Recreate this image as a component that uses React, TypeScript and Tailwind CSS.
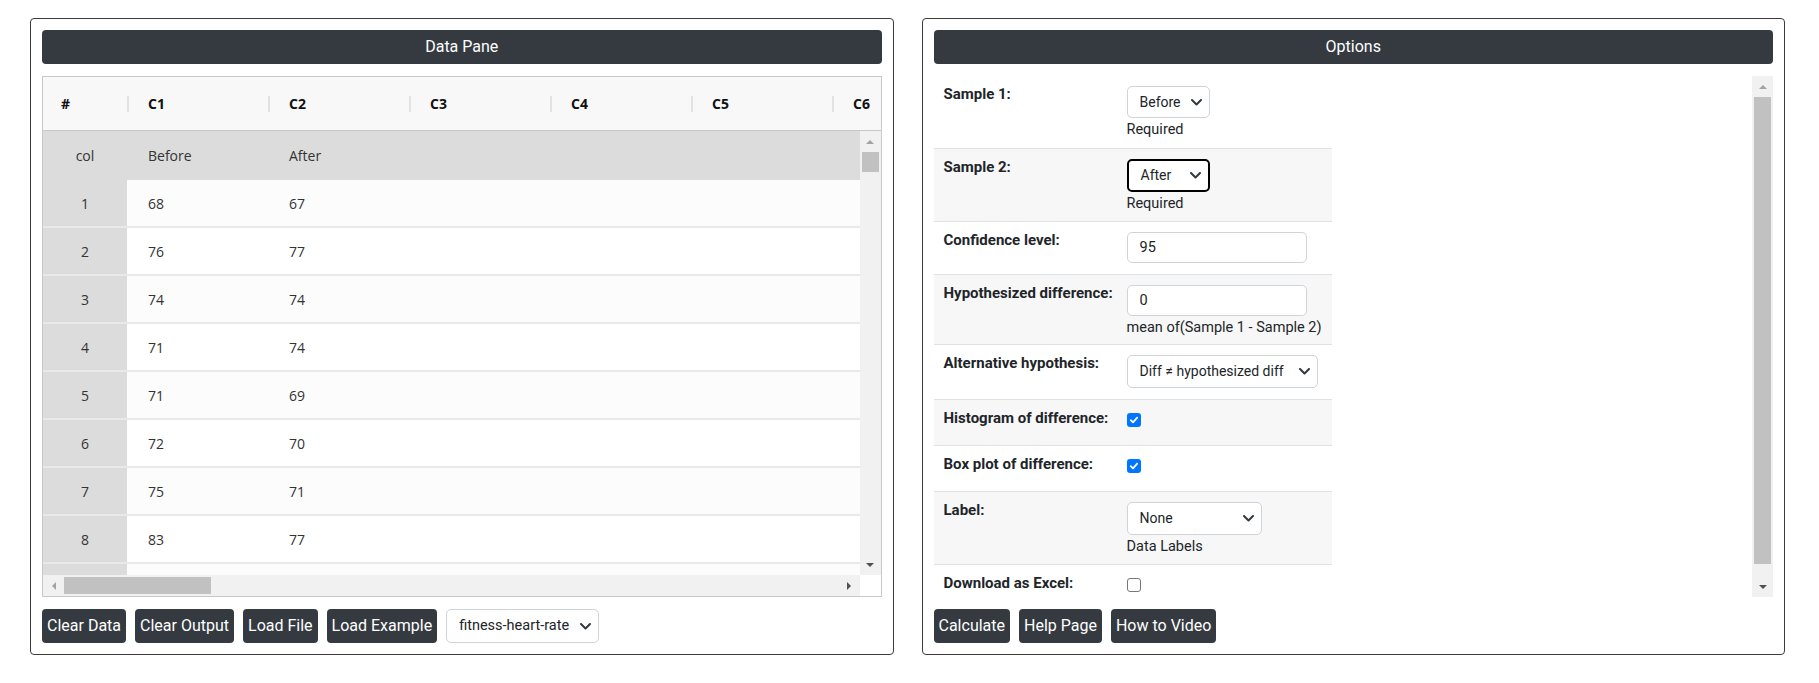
import React from 'react';

const rows = [
  { n: '1', a: '68', b: '67' },
  { n: '2', a: '76', b: '77' },
  { n: '3', a: '74', b: '74' },
  { n: '4', a: '71', b: '74' },
  { n: '5', a: '71', b: '69' },
  { n: '6', a: '72', b: '70' },
  { n: '7', a: '75', b: '71' },
  { n: '8', a: '83', b: '77' },
  { n: '', a: '', b: '' },
];

const Chevron = () => (
  <svg width="11" height="7" viewBox="0 0 11 7" className="shrink-0">
    <path d="M1 1l4.5 4.5L10 1" fill="none" stroke="#343a40" strokeWidth="2" strokeLinecap="round" strokeLinejoin="round" />
  </svg>
);

const Arrow = ({ dir, dark }: { dir: 'up' | 'down' | 'left' | 'right'; dark?: boolean }) => {
  const fill = dark ? '#505050' : '#a3a3a3';
  const pts = {
    up: '0,4 4,0 8,4',
    down: '0,0 8,0 4,4',
    left: '4,0 4,8 0,4',
    right: '0,0 4,4 0,8',
  }[dir];
  const vertical = dir === 'up' || dir === 'down';
  return (
    <svg width={vertical ? 8 : 4} height={vertical ? 4 : 8} viewBox={vertical ? '0 0 8 4' : '0 0 4 8'}>
      <polygon points={pts} fill={fill} />
    </svg>
  );
};

const FakeSelect = ({ value, width, height = 'h-[32px]', focused }: { value: string; width: string; height?: string; focused?: boolean }) => (
  <div
    className={`${width} ${height} flex items-center justify-between pl-[12px] pr-[7px] rounded-[5px] bg-white text-[14px] text-[#212529] ${
      focused ? 'border-2 border-black' : 'border border-[#ced4da]'
    }`}
  >
    <span className="whitespace-nowrap">{value}</span>
    <Chevron />
  </div>
);

const DarkButton = ({ label }: { label: string }) => (
  <button className="h-[34px] px-[5px] rounded-[4px] bg-[#343a40] text-white text-[16px] leading-none whitespace-nowrap">
    {label}
  </button>
);

const PaneHeader = ({ title }: { title: string }) => (
  <div className="h-[34px] rounded-[4px] bg-[#343a40] text-white text-[16px] flex items-center justify-center">
    {title}
  </div>
);

const DataPane = () => (
  <section className="flex-1 basis-0 min-w-0 border border-[#3c3c3c] rounded-[4px] p-[11px] flex flex-col">
    <PaneHeader title="Data Pane" />

    {/* grid */}
    <div className="mt-[12px] h-[521px] min-w-0 border border-[#c8c8c8] flex flex-col font-['Open_Sans',sans-serif] text-[14px]">
      <div className="h-[54px] shrink-0 bg-[#f8f8f8] border-b border-[#c8c8c8] flex overflow-hidden font-bold text-[#111]">
        <div className="w-[84px] shrink-0 pl-[18px] flex items-center">#</div>
        {['C1', 'C2', 'C3', 'C4', 'C5', 'C6'].map((c) => (
          <div key={c} className="w-[141px] shrink-0 flex items-center">
            <span className="w-[2px] h-[16px] bg-[#e2e2e2] mr-[19px]" />
            {c}
          </div>
        ))}
      </div>

      <div className="flex-1 min-h-0 flex">
        <div className="flex-1 min-w-0 overflow-hidden text-[#333]">
          <div className="h-[49px] bg-[#dcdcdc] flex items-center">
            <div className="w-[84px] shrink-0 text-center">col</div>
            <div className="w-[141px] shrink-0 pl-[21px]">Before</div>
            <div className="w-[141px] shrink-0 pl-[21px]">After</div>
          </div>
          {rows.map((r, i) => (
            <div
              key={i}
              className={`h-[48px] flex border-b-2 border-[#e9e9e9] ${i % 2 === 0 ? 'bg-[#fcfcfc]' : 'bg-white'}`}
            >
              <div className="w-[84px] shrink-0 bg-[#dcdcdc] flex items-center justify-center">{r.n}</div>
              <div className="w-[141px] shrink-0 pl-[21px] flex items-center">{r.a}</div>
              <div className="w-[141px] shrink-0 pl-[21px] flex items-center">{r.b}</div>
            </div>
          ))}
        </div>
        <div className="w-[21px] shrink-0 bg-[#f1f1f1] flex flex-col">
          <div className="h-[21px] flex items-center justify-center">
            <Arrow dir="up" />
          </div>
          <div className="mx-[2px] h-[20px] bg-[#c1c1c1]" />
          <div className="flex-1" />
          <div className="h-[21px] flex items-center justify-center">
            <Arrow dir="down" dark />
          </div>
        </div>
      </div>

      <div className="h-[21px] shrink-0 flex">
        <div className="flex-1 bg-[#f1f1f1] flex items-center">
          <div className="w-[21px] h-full flex items-center justify-center">
            <Arrow dir="left" />
          </div>
          <div className="w-[147px] h-[17px] bg-[#c1c1c1]" />
          <div className="flex-1" />
          <div className="w-[21px] h-full flex items-center justify-center">
            <Arrow dir="right" dark />
          </div>
        </div>
        <div className="w-[21px] bg-white" />
      </div>
    </div>

    <div className="mt-[12px] flex items-center gap-[9px]">
      <DarkButton label="Clear Data" />
      <DarkButton label="Clear Output" />
      <DarkButton label="Load File" />
      <DarkButton label="Load Example" />
      <div className="w-[153px] h-[34px] flex items-center justify-between pl-[12px] pr-[7px] rounded-[5px] border border-[#ced4da] text-[14.5px] text-[#212529]">
        <span>fitness-heart-rate</span>
        <Chevron />
      </div>
    </div>
  </section>
);

const Check = ({ checked }: { checked?: boolean }) =>
  checked ? (
    <span className="w-[14px] h-[14px] rounded-[3px] bg-[#0075ff] flex items-center justify-center">
      <svg width="10" height="10" viewBox="0 0 10 10">
        <path d="M1.8 5.2l2.2 2.2 4.2-4.8" fill="none" stroke="white" strokeWidth="1.8" strokeLinecap="round" strokeLinejoin="round" />
      </svg>
    </span>
  ) : (
    <span className="w-[14px] h-[14px] rounded-[3px] border border-[#767676] bg-white block" />
  );

type OptRow = {
  label: string;
  h: string;
  body: React.ReactNode;
};

const Helper = ({ children }: { children: React.ReactNode }) => (
  <div className="mt-[2px] h-[20px] leading-[20px] text-[14.5px] text-[#212529] whitespace-nowrap">{children}</div>
);

const Input = ({ value }: { value: string }) => (
  <div className="w-[180px] h-[31px] border border-[#ced4da] rounded-[5px] bg-white pl-[12px] flex items-center text-[14.5px] text-[#212529]">
    {value}
  </div>
);

const CheckBody = ({ checked }: { checked?: boolean }) => (
  <div className="h-[25px] pt-[3px]">
    <Check checked={checked} />
  </div>
);

const optRows: OptRow[] = [
  {
    label: 'Sample 1:',
    h: 'h-[72px]',
    body: (
      <>
        <FakeSelect value="Before" width="w-[83px]" />
        <Helper>Required</Helper>
      </>
    ),
  },
  {
    label: 'Sample 2:',
    h: 'h-[73px]',
    body: (
      <>
        <FakeSelect value="After" width="w-[83px]" height="h-[33px]" focused />
        <Helper>Required</Helper>
      </>
    ),
  },
  { label: 'Confidence level:', h: 'h-[53px]', body: <Input value="95" /> },
  {
    label: 'Hypothesized difference:',
    h: 'h-[70px]',
    body: (
      <>
        <Input value="0" />
        <Helper>mean of(Sample 1 - Sample 2)</Helper>
      </>
    ),
  },
  {
    label: 'Alternative hypothesis:',
    h: 'h-[55px]',
    body: <FakeSelect value="Diff ≠ hypothesized diff" width="w-[191px]" height="h-[33px]" />,
  },
  { label: 'Histogram of difference:', h: 'h-[46px]', body: <CheckBody checked /> },
  { label: 'Box plot of difference:', h: 'h-[46px]', body: <CheckBody checked /> },
  {
    label: 'Label:',
    h: 'h-[73px]',
    body: (
      <>
        <FakeSelect value="None" width="w-[135px]" height="h-[33px]" />
        <Helper>Data Labels</Helper>
      </>
    ),
  },
  { label: 'Download as Excel:', h: 'h-[46px]', body: <CheckBody /> },
];

const OptionsPane = () => (
  <section className="flex-1 basis-0 min-w-0 border border-[#3c3c3c] rounded-[4px] p-[11px] flex flex-col">
    <PaneHeader title="Options" />

    <div className="mt-[12px] h-[521px] flex">
      <div className="flex-1 min-w-0 overflow-hidden">
        <div className="w-[398px]">
          {optRows.map((r, i) => (
            <div
              key={r.label}
              className={`${r.h} shrink-0 flex ${i > 0 ? 'border-t border-[#dee2e6]' : ''} ${
                i % 2 === 1 ? 'bg-[#f7f7f7]' : 'bg-white'
              }`}
            >
              <div className="w-[183px] shrink-0 px-[10px] pt-[8px] leading-[20px] text-[15px] font-bold text-[#212529] whitespace-nowrap">
                {r.label}
              </div>
              <div className="flex-1 px-[10px] pt-[10px]">{r.body}</div>
            </div>
          ))}
        </div>
      </div>
      <div className="w-[21px] shrink-0 bg-[#f1f1f1] flex flex-col">
        <div className="h-[21px] flex items-center justify-center">
          <Arrow dir="up" />
        </div>
        <div className="mx-[2px] h-[467px] bg-[#c1c1c1]" />
        <div className="flex-1" />
        <div className="h-[21px] flex items-center justify-center">
          <Arrow dir="down" dark />
        </div>
      </div>
    </div>

    <div className="mt-[12px] flex items-center gap-[9px]">
      <DarkButton label="Calculate" />
      <DarkButton label="Help Page" />
      <DarkButton label="How to Video" />
    </div>
  </section>
);

export default function App() {
  return (
    <div className="w-full min-h-[683px] bg-white pt-[18px] pl-[30px] pr-[34px] flex items-start gap-[28px] font-['Roboto',sans-serif]">
      <DataPane />
      <OptionsPane />
    </div>
  );
}
